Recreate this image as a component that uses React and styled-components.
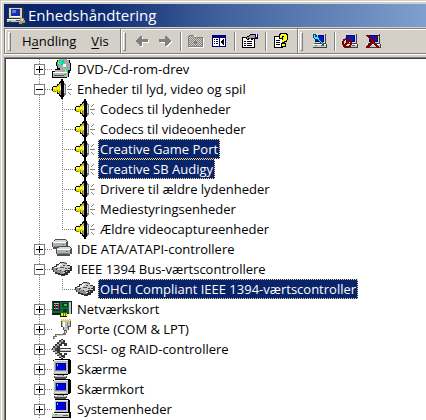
import React, { useState } from "react";
import styled, { createGlobalStyle, css } from "styled-components";

const GlobalStyle = createGlobalStyle`
  * { box-sizing: border-box; }
  body { margin: 0; background: #d4d0c8; font-family: "Open Sans", "Noto Sans", sans-serif; font-size: 13px; color: #000; }
  button { font: inherit; color: inherit; border: 0; padding: 0; background: none; }
  ul { list-style: none; margin: 0; padding: 0; }
`;

const Window = styled.div`
  display: flex;
  flex-direction: column;
  min-height: 100vh;
  padding: 4px 0 0 4px;
  background: #d4d0c8;
  box-shadow: inset 1px 1px #d4d0c8, inset 2px 2px #fff;
  overflow: hidden;
`;

const TitleBar = styled.header`
  display: flex;
  align-items: center;
  gap: 2px;
  height: 23px;
  padding-left: 2px;
  background: linear-gradient(90deg, #0a246a 0%, #0d2a70 22%, #3f5f9b 50%, #7f9fcf 100%);
`;

const Title = styled.h1`
  margin: 0;
  color: #fff;
  font-size: 15px;
  font-weight: 400;
  line-height: 23px;
  white-space: nowrap;
`;

const Toolbars = styled.div`
  display: flex;
  height: 26px;
  margin: 1px 0 3px;
  border: solid #808080;
  border-width: 1px 0 1px 1px;
  box-shadow: inset 1px 1px #fff, 0 1px #fff;
`;

const Band = styled.div`
  display: flex;
  align-items: center;
  padding: 0 ${(p) => (p.$menu ? 11 : 4)}px 0 ${(p) => (p.$first ? 3 : 2)}px;
  ${(p) => !p.$last && css`
    border-right: 1px solid #808080;
    box-shadow: 1px 0 #fff;
  `}
`;

const Grip = styled.span`
  width: 3px;
  height: 19px;
  margin-right: ${(p) => (p.$menu ? 11 : 5)}px;
  border: 1px solid;
  border-color: #fff #808080 #808080 #fff;
`;

const MenuButton = styled.button`
  line-height: 22px;
  & + & { margin-left: 15px; }
  u { text-underline-offset: 2px; }
`;

const ToolButton = styled.button`
  display: flex;
  align-items: center;
  justify-content: center;
  width: 23px;
  height: 22px;
`;

const Separator = styled.span`
  width: 2px;
  height: 19px;
  margin: 0 3px;
  border-left: 1px solid #808080;
  border-right: 1px solid #fff;
`;

const TreePane = styled.main`
  flex: 1;
  border: solid #808080;
  border-width: 1px 0 0 1px;
  background: #fff;
  box-shadow: inset 1px 1px #404040;
  padding: 1px 0 0 1px;
`;

const Row = styled.div`
  display: flex;
  align-items: center;
  height: 20px;
  white-space: nowrap;
`;

const dots = (dir) => `repeating-linear-gradient(${dir}, #808080 0 1px, transparent 1px 2px)`;

const TrunkCell = styled.span`
  flex: none;
  width: 46px;
  height: 20px;
  padding: 5px 0 0 28px;
  background-image: ${dots("180deg")}, ${dots("90deg")};
  background-size: 1px 20px, ${(p) => (p.$joined ? 13 : 0)}px 1px;
  background-position: 33px 0, 33px 10px;
  background-repeat: no-repeat;
`;

const BranchCell = styled.span`
  flex: none;
  width: 23px;
  height: 20px;
  background-image: ${dots("180deg")}, ${dots("90deg")};
  background-size: 1px ${(p) => (p.$last ? 10 : 20)}px, 13px 1px;
  background-position: 10px 0, 10px 10px;
  background-repeat: no-repeat;
`;

const Toggle = styled.button`
  display: block;
  width: 11px;
  height: 11px;
  border: 1px solid #808080;
  background: #fff;
  svg { display: block; }
`;

const Label = styled.span`
  height: 20px;
  margin-left: 3px;
  padding: 0 1px;
  border: 1px solid transparent;
  line-height: 18px;
  ${(p) => p.$selected && css`
    color: #fff;
    background: #0a246a;
    border: 1px dotted #f5db95;
  `}
`;

const Icon = ({ size = 20, children }) => (
  <svg width={size} height={size} viewBox={`0 0 ${size} ${size}`} shapeRendering="crispEdges" aria-hidden="true">
    {children}
  </svg>
);

const Speaker = () => (
  <Icon>
    <path d="M9 0h2v2h1v2h1v12h-1v2h-1v2H9v-2H8v-1H7v-2H5v-2H1v-1H0V8h1V7h4V5h2V3h1V2h1z" fill="#000" />
    <path d="M1 8h4V7h1V6h1V5h1v10H7v-1H6v-1H1z" fill="#e8e000" />
    <path d="M1 8h3v2H1zM5 8h2v2H5z" fill="#ffff40" />
    <path d="M5 11h1v2H5zM7 12h1v3H7zM1 12h3v1H1z" fill="#908800" />
    <path d="M8 4h1v12H8z" fill="#a0a0a0" />
    <path d="M8 7h1v4H8z" fill="#fff" />
    <path d="M12 4h1v1h1v11h-1v1h-1z" fill="#808080" />
    <path d="M12 6h1v8h-1z" fill="#d8d8d8" />
    <path d="M15 10h5v1h-5zM16 7h1v1h-1zM17 6h1v1h-1zM18 5h1v1h-1zM16 13h1v1h-1zM17 14h1v1h-1zM18 15h1v1h-1z" fill="#808080" />
  </Icon>
);

const Disc = () => (
  <Icon>
    <path d="M7 0h8v1h3v3h1v8h-1v2h-1v4h-2v1H0v-7h3v-2h2V7H4V3h1V1h2z" fill="#000" />
    <path d="M7 0h8v1h2v3h1v7h-2v2H8V9H6V7H5V3h1V1h1z" fill="#a8a8a8" />
    <path d="M5 3h2V1h5v3h-1v2H9V4H7v3H5z" fill="#00e070" />
    <path d="M8 1h2v4H8zM14 9h2v3h-2z" fill="#00e8ff" />
    <path d="M6 2h1v3H6zM13 10h1v3h-1z" fill="#ffe000" />
    <path d="M11 5h3v3h-3z" fill="#fff" />
    <path d="M1 13h2v-2h5v2h8v5H1z" fill="#b8b8b8" />
    <path d="M1 13h14v1H1z" fill="#fff" />
    <path d="M2 16h10v1H2z" fill="#505050" />
    <path d="M12 15h2v1h-2z" fill="#00d000" />
  </Icon>
);

const Drives = () => (
  <Icon>
    {[[0, 0], [4, 7]].map(([x, y]) => (
      <g key={x} transform={`translate(${x} ${y})`}>
        <path d="M3 0h11v1h1v1h1v6h-2v2H1V8H0V3h1V2h1V1h1z" fill="#505050" />
        <path d="M3 1h11v1h1v1H1V2h2z" fill="#d8d8d8" />
        <path d="M1 4h13v4H1z" fill="#b0b0b0" />
        <path d="M1 3h13v1H1z" fill="#fff" />
        <path d="M2 7h11v1H2z" fill="#808080" />
        <path d="M10 5h2v1h-2z" fill="#00e000" />
      </g>
    ))}
  </Icon>
);

const Firewire = () => (
  <Icon>
    <path d="M8 3h4v1h3v2h3v1h2v5h-2v2h-2v2h-3v1H9v-1H6v-1H3v-2H1v-2H0V8h2V7h2V5h3V4h1z" fill="#303030" />
    <path d="M8 4h4v1h3v2h3v2h-2v2h-3v1H9v-1H5v-1H2V8h3V6h3z" fill="#c8c8c8" />
    <path d="M1 9h3v2h4v1h4v3H8v-1H5v-1H2v-2H1z" fill="#909090" />
    <path d="M3 8h2V7h2V5h3v1H8v2H5v1H3z" fill="#fff" />
    <path d="M8 8h4v1H8zM11 6h2v1h-2zM13 9h2v1h-2zM4 9h2v1H4z" fill="#505050" />
    <path d="M11 13h2v1h-2zM14 12h1v1h-1zM16 10h2v1h-2z" fill="#e0e0e0" />
    <path d="M12 3h2v2h-2z" fill="#808080" />
  </Icon>
);

const NetCard = () => (
  <Icon>
    <path d="M0 2h20v13h-5v3h-7v-2H0z" fill="#102010" />
    <path d="M0 3h18v11H0z" fill="#007038" />
    <path d="M1 3h7v9H1z" fill="#202020" />
    <path d="M2 4h5v1H2zM2 6h5v1H2zM2 9h5v1H2z" fill="#b8b8b8" />
    <path d="M3 5h1v6H3zM6 5h1v6H6z" fill="#804040" />
    <path d="M10 4h6v4h-6zM11 10h4v3h-4z" fill="#103820" />
    <path d="M12 5h3v2h-3z" fill="#60a070" />
    <path d="M17 3h2v12h-2z" fill="#c8c8c8" />
    <path d="M9 14h6v3H9z" fill="#ffe800" />
    <path d="M11 14h1v3h-1zM13 14h1v3h-1z" fill="#806000" />
  </Icon>
);

const Port = () => (
  <Icon>
    <path d="M9 0h10v8h-2v3h-2v2h-3v-2h-1V8H9z" fill="#505050" />
    <path d="M10 1h8v6h-2v4h-4V7h-2z" fill="#c0c0c0" />
    <path d="M9 0h10v2H9z" fill="#e8d840" />
    <path d="M10 0h1v1h-1zM12 0h1v1h-1zM14 0h1v1h-1zM16 0h1v1h-1z" fill="#fff" />
    <path d="M11 3h2v5h-2z" fill="#fff" />
    <path d="M15 3h1v6h-1z" fill="#888" />
    <path d="M12 12h3v2h-1v2h-3v1H5v1H3v2H1v-3h2v-2h8v-1h1z" fill="#707070" />
    <path d="M13 12h1v2h-1zM4 16h7v1H4zM2 18h1v1H2z" fill="#d8d8d8" />
  </Icon>
);

const Scsi = () => (
  <Icon>
    <path d="M9 0h2v1h2v3h2v3h-3V5h-2v2H8v2h11v4H8v1h2v2h2v-2h3v2h-2v3h-2v1H9v-1H7v-2H5v-2H3v-2H1v-2H0V9h1V7h2V5h2V3h2V1h2z" fill="#383838" />
    <path d="M9 1h2v2H9v2H7v2H5v2H3v3h2v2h2v2h2v2h2v1H9v-1H7v-2H5v-2H3v-2H1V9h2V7h2V5h2V3h2z" fill="#a8a8a8" />
    <path d="M8 10h11v2H8z" fill="#c0c0c0" />
    <path d="M9 10h9v1H9z" fill="#fff" />
  </Icon>
);

const Monitor = () => (
  <Icon>
    <path d="M3 0h15v1h1v13h-1v1h-2v1H2v-1H1V1h2z" fill="#000" />
    <path d="M2 1h14v14H1V2h1z" fill="#c0c0c0" />
    <path d="M2 1h14v1H2zM1 2h1v12H1z" fill="#f0f0f0" />
    <path d="M3 4h11v8H3z" fill="#808080" />
    <path d="M4 4h10v7H4z" fill="#000080" />
    <path d="M5 5h8v6H5z" fill="#0000e8" />
    <path d="M5 5h1v2H5z" fill="#00ffff" />
    <path d="M3 13h11v1H3z" fill="#e0e0e0" />
    <path d="M5 16h7v1h3v2h-1v1H3v-1H2v-2h3z" fill="#505050" />
    <path d="M5 16h6v1H5zM3 17h11v1H3z" fill="#c0c0c0" />
  </Icon>
);

const Computer = () => (
  <Icon>
    <path d="M3 0h14v1h1v12h1v6H0v-5h2V1h1z" fill="#000" />
    <path d="M2 1h14v12H2z" fill="#c0c0c0" />
    <path d="M2 1h14v1H2zM2 1h1v12H2z" fill="#f0f0f0" />
    <path d="M4 3h10v8H4z" fill="#000080" />
    <path d="M5 4h8v7H5z" fill="#0000e8" />
    <path d="M5 4h1v2H5z" fill="#00ffff" />
    <path d="M0 14h17v4H0z" fill="#c0c0c0" />
    <path d="M1 14h16v1H1z" fill="#fff" />
    <path d="M11 16h5v1h-5z" fill="#606060" />
    <path d="M3 15h2v1H3z" fill="#00c000" />
  </Icon>
);

const AppIcon = () => (
  <Icon>
    <path d="M3 1h14v1h1v10h2v5h-2v2h-5v-2H0v-4h2V2h1z" fill="#303030" />
    <path d="M3 2h13v10H3z" fill="#d0d0d0" />
    <path d="M5 3h9v7H5z" fill="#1830a0" />
    <path d="M6 4h4v3H6z" fill="#5080e0" />
    <path d="M5 10h9v1H5z" fill="#fff" />
    <path d="M1 13h15v3H1z" fill="#c0c0c0" />
    <path d="M1 13h15v1H1z" fill="#fff" />
    <path d="M10 14h4v1h-4z" fill="#505050" />
    <path d="M14 12h4v2h1v3h-3v1h-3v-2h1z" fill="#a09880" />
    <path d="M15 13h2v2h-2z" fill="#e8e0c0" />
    <path d="M3 15h2v1H3z" fill="#00c000" />
  </Icon>
);

const Arrow = ({ right }) => (
  <Icon size={16}>
    <path
      transform={right ? undefined : "matrix(-1 0 0 1 17 1)"}
      d={right ? "M9 4h2v1h1v1h1v1h1v1h1v2h-1v1h-1v1h-1v1h-1v1H9v-4H3V7h6z" : "M8 3h2v1h1v1h1v1h1v1h1v2h-1v1h-1v1h-1v1h-1v1H8v-4H2V6h6z"}
      fill="#fff"
    />
    <path
      transform={right ? undefined : "matrix(-1 0 0 1 16 0)"}
      d="M8 3h2v1h1v1h1v1h1v1h1v2h-1v1h-1v1h-1v1h-1v1H8v-4H2V6h6z"
      fill="#808080"
    />
  </Icon>
);

const FolderUp = () => (
  <Icon size={16}>
    <defs>
      <pattern id="checker" width="2" height="2" patternUnits="userSpaceOnUse">
        <path d="M0 0h1v1H0zM1 1h1v1H1z" fill="#808080" />
      </pattern>
    </defs>
    <path d="M1 3h1V2h5v1h1v1h7v1h1v10H1z" fill="#fff" />
    <path d="M0 3h1V2h5v1h1v1h8v10H0z" fill="#d4d0c8" />
    <path d="M0 3h1V2h5v1h1v1h8v10H0z" fill="url(#checker)" />
    <path d="M1 2h5v1H1zM0 3h1v11H0zM7 4h8v1H7zM14 5h1v9h-1zM0 13h15v1H0zM7 7h1v1h1v1h1v1H8v1H7v-1H5V9h1V8h1z" fill="#808080" />
  </Icon>
);

const PanelIcon = () => (
  <Icon size={16}>
    <path d="M1 2h14v12H1z" fill="#000080" />
    <path d="M2 5h6v8H2zM9 5h5v8H9z" fill="#fff" />
    <path d="M3 6h1v1H3zM5 6h2v1H5zM3 8h1v1H3zM5 8h2v1H5zM3 10h1v1H3zM5 10h2v1H5zM12 6h1v6h-1v-1h-1v-1h-1V8h1V7h1z" fill="#000" />
  </Icon>
);

const Properties = () => (
  <Icon size={16}>
    <path d="M0 4h13v11H0z" fill="#000" />
    <path d="M1 5h11v9H1z" fill="#fff" />
    <path d="M2 8h2v1H2zM5 8h5v1H5zM2 10h2v1H2zM5 10h5v1H5zM2 12h2v1H2zM5 12h5v1H5z" fill="#000" />
    <path d="M4 4h1V3h2V2h1V1h5v5h-2v1H9V6H7v1H5V6H4z" fill="#000" />
    <path d="M5 4h2V3h1V2h5v3H9v1H8V5H6v1H5z" fill="#a0a0a0" />
    <path d="M13 1h3v5h-3z" fill="#000080" />
    <path d="M14 1h1v3h-1z" fill="#fff" />
  </Icon>
);

const Help = () => (
  <Icon size={16}>
    <path d="M1 3h9v12H1z" fill="#000" />
    <path d="M2 4h7v10H2z" fill="#fff" />
    <path d="M3 7h4v1H3zM3 9h4v1H3zM3 11h4v1H3z" fill="#000" />
    <path d="M7 0h7v1h1v6h-1v2h-2v1h1v4H8v-4h1V8h1V6h1V4h-1v2H6V1h1z" fill="#000" />
    <path d="M8 1h5v1h1v5h-1v1h-2v1H9V7h1V6h1V3H9v2H7V2h1zM9 11h3v2H9z" fill="#ff0" />
    <path d="M8 1h3v1H8zM9 11h1v1H9z" fill="#fff" />
  </Icon>
);

const SmallPc = () => (
  <>
    <path d="M3 1h12v10h1v4H2v-4h1z" fill="#404040" />
    <path d="M3 1h11v9H3z" fill="#d8d8d8" />
    <path d="M4 2h9v7H4z" fill="#000080" />
    <path d="M5 3h7v5H5z" fill="#0018c8" />
    <path d="M2 11h13v3H2z" fill="#c8c8c8" />
    <path d="M2 11h13v1H2z" fill="#fff" />
    <path d="M10 12h3v1h-3z" fill="#606060" />
  </>
);

const ScanPc = () => (
  <Icon size={16}>
    <SmallPc />
    <path d="M2 1h3v1h2v2h1v2h1v1h1v1h1v1h1v1h1v2h-2v-1h-1v-1H9V9H8V8H7V7H5V6H3V5H2z" fill="#005070" />
    <path d="M3 2h1v2h2V2h1v3h1v2h1v1h1v1h1v1h1v1h-1v-1h-1V9H9V8H8V7H7V6H4V5H3z" fill="#40e8ff" />
    <path d="M4 12h2v1H4z" fill="#00d000" />
  </Icon>
);

const DisabledPc = () => (
  <Icon size={16}>
    <SmallPc />
    <circle cx="5" cy="10" r="4" fill="none" stroke="#800000" strokeWidth="2" />
    <path d="M7 6h2v2H8v1H7v1H6v1H5v1H4v1H3v1H1v-2h1v-1h1v-1h1V9h1V8h1V7h1z" fill="#800000" />
  </Icon>
);

const RemovePc = () => (
  <Icon size={16}>
    <SmallPc />
    <path d="M1 2h3v1h1v1h1v1h1v1h2V5h1V4h1V3h1V2h2v1h-1v1h-1v1h-1v1h-1v1H9v2h1v1h1v1h1v1h1v1h1v2h-2v-1h-1v-1h-1v-1H9v-1H7v1H6v1H5v1H4v1H1v-2h1v-1h1v-1h1v-1h1V9h1V7H5V6H4V5H3V4H2V3H1z" fill="#800000" />
  </Icon>
);

const devices = [
  { name: "DVD-/Cd-rom-drev", icon: Disc },
  {
    name: "Enheder til lyd, video og spil",
    icon: Speaker,
    open: true,
    children: [
      { name: "Codecs til lydenheder" },
      { name: "Codecs til videoenheder" },
      { name: "Creative Game Port", selected: true },
      { name: "Creative SB Audigy", selected: true },
      { name: "Drivere til ældre lydenheder" },
      { name: "Mediestyringsenheder" },
      { name: "Ældre videocaptureenheder" },
    ],
  },
  { name: "IDE ATA/ATAPI-controllere", icon: Drives },
  {
    name: "IEEE 1394 Bus-værtscontrollere",
    icon: Firewire,
    open: true,
    children: [{ name: "OHCI Compliant IEEE 1394-værtscontroller", selected: true }],
  },
  { name: "Netværkskort", icon: NetCard },
  { name: "Porte (COM & LPT)", icon: Port },
  { name: "SCSI- og RAID-controllere", icon: Scsi },
  { name: "Skærme", icon: Monitor },
  { name: "Skærmkort", icon: Monitor },
  { name: "Systemenheder", icon: Computer },
];

function DeviceGroup({ device }) {
  const [open, setOpen] = useState(Boolean(device.open));
  const DeviceIcon = device.icon;
  return (
    <li role="treeitem" aria-expanded={open}>
      <Row>
        <TrunkCell $joined>
          <Toggle aria-label={device.name} onClick={() => setOpen(!open)}>
            <svg width="9" height="9" viewBox="0 0 9 9" shapeRendering="crispEdges">
              <path d={open ? "M1 4h7v1H1z" : "M1 4h7v1H1zM4 1h1v7H4z"} />
            </svg>
          </Toggle>
        </TrunkCell>
        <DeviceIcon />
        <Label>{device.name}</Label>
      </Row>
      {open && device.children && (
        <ul role="group">
          {device.children.map((child, i) => (
            <li role="treeitem" aria-selected={Boolean(child.selected)} key={child.name}>
              <Row>
                <TrunkCell />
                <BranchCell $last={i === device.children.length - 1} />
                <DeviceIcon />
                <Label $selected={child.selected}>{child.name}</Label>
              </Row>
            </li>
          ))}
        </ul>
      )}
    </li>
  );
}

export default function App() {
  return (
    <>
      <GlobalStyle />
      <Window>
        <TitleBar>
          <AppIcon />
          <Title>Enhedshåndtering</Title>
        </TitleBar>
        <Toolbars>
          <Band $first $menu>
            <Grip $menu />
            <MenuButton>H<u>a</u>ndling</MenuButton>
            <MenuButton><u>V</u>is</MenuButton>
          </Band>
          <Band>
            <Grip />
            <ToolButton aria-label="Tilbage"><Arrow /></ToolButton>
            <ToolButton aria-label="Frem"><Arrow right /></ToolButton>
            <Separator />
            <ToolButton aria-label="Et niveau op"><FolderUp /></ToolButton>
            <ToolButton aria-label="Vis/skjul konsoltræ"><PanelIcon /></ToolButton>
            <Separator />
            <ToolButton aria-label="Egenskaber"><Properties /></ToolButton>
            <Separator />
            <ToolButton aria-label="Hjælp"><Help /></ToolButton>
          </Band>
          <Band $last>
            <Grip />
            <ToolButton aria-label="Søg efter hardwareændringer"><ScanPc /></ToolButton>
            <Separator />
            <ToolButton aria-label="Deaktiver"><DisabledPc /></ToolButton>
            <ToolButton aria-label="Fjern"><RemovePc /></ToolButton>
          </Band>
        </Toolbars>
        <TreePane>
          <ul role="tree" aria-label="Enheder">
            {devices.map((device) => (
              <DeviceGroup key={device.name} device={device} />
            ))}
          </ul>
        </TreePane>
      </Window>
    </>
  );
}
